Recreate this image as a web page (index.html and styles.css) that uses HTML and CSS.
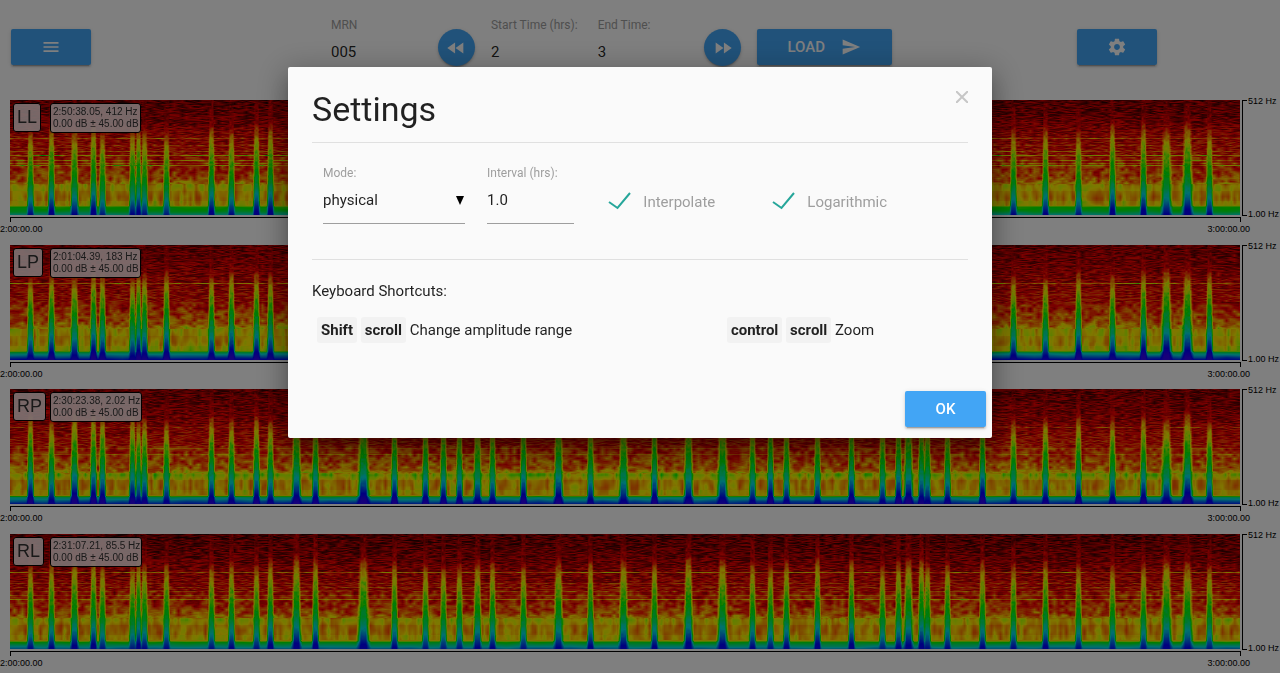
FILE: index.html
```html
<!DOCTYPE html>
<html lang="en">
<head>
<meta charset="utf-8">
<meta name="viewport" content="width=device-width, initial-scale=1">
<title>Spectrogram Viewer</title>
<link rel="stylesheet" href="styles.css">
</head>
<body>
<div class="page">
  <header class="toolbar">
    <div class="cell menu-cell">
      <button class="btn" type="button" aria-label="Menu">
        <svg class="icon" viewBox="0 0 24 24"><path d="M3 18h18v-2H3v2zm0-5h18v-2H3v2zm0-7v2h18V6H3z"/></svg>
      </button>
    </div>
    <div class="cell field mrn-cell">
      <label for="mrn">MRN</label>
      <input id="mrn" type="text" value="005">
    </div>
    <div class="cell">
      <button class="btn round" type="button" aria-label="Previous">
        <svg class="icon" viewBox="0 0 24 24"><path d="M11 18V6l-8.5 6 8.5 6zm.5-6l8.5 6V6l-8.5 6z"/></svg>
      </button>
    </div>
    <div class="cell field time-cell">
      <label for="start">Start Time (hrs):</label>
      <input id="start" type="text" value="2">
    </div>
    <div class="cell field time-cell">
      <label for="end">End Time:</label>
      <input id="end" type="text" value="3">
    </div>
    <div class="cell">
      <button class="btn round" type="button" aria-label="Next">
        <svg class="icon" viewBox="0 0 24 24"><path d="M4 18l8.500-6L4 6v12zm9-12v12l8.500-6L13 6z"/></svg>
      </button>
    </div>
    <div class="cell load-cell">
      <button class="btn load" type="button">LOAD
        <svg class="icon" viewBox="0 0 24 24"><path d="M2.010 21L23 12 2.010 3 2 10l15 2-15 2z"/></svg>
      </button>
    </div>
    <div class="cell gear-cell">
      <button class="btn" type="button" aria-label="Settings">
        <svg class="icon" viewBox="0 0 24 24"><path d="M19.430 12.980c.04-.32.07-.64.07-.98s-.03-.66-.07-.98l2.110-1.650c.19-.15.24-.42.12-.64l-2-3.460c-.12-.22-.39-.3-.61-.22l-2.490 1c-.52-.4-1.080-.73-1.690-.98l-.38-2.650C14.460 2.180 14.250 2 14 2h-4c-.25 0-.46.18-.49.42l-.38 2.650c-.61.25-1.170.59-1.690.98l-2.490-1c-.23-.09-.49 0-.61.22l-2 3.460c-.13.22-.07.49.12.64l2.110 1.650c-.04.32-.07.65-.07.98s.03.66.07.98l-2.110 1.650c-.19.15-.24.42-.12.64l2 3.460c.12.22.39.3.61.22l2.490-1c.52.4 1.080.73 1.690.98l.38 2.650c.03.24.24.42.49.42h4c.25 0 .46-.18.49-.42l.38-2.650c.61-.25 1.170-.59 1.690-.98l2.490 1c.23.09.49 0 .61-.22l2-3.460c.12-.22.07-.49-.12-.64l-2.110-1.650zM12 15.500c-1.930 0-3.500-1.570-3.500-3.500s1.570-3.500 3.500-3.500 3.500 1.570 3.500 3.500-1.570 3.500-3.500 3.500z"/></svg>
      </button>
    </div>
  </header>

  <main class="charts">
    <section class="chart">
      <div class="plot"><canvas data-row="0"></canvas>
        <div class="tags"><span class="name">LL</span><span class="readout">2:50:38.05, 412 Hz<br>0.00 dB ± 45.00 dB</span></div></div>
      <div class="freq"><i></i><div><span>512 Hz</span><span>1.00 Hz</span></div></div>
      <div class="time"><i></i><div><span>2:00:00.00</span><span>3:00:00.00</span></div></div>
    </section>
    <section class="chart">
      <div class="plot"><canvas data-row="1"></canvas>
        <div class="tags"><span class="name">LP</span><span class="readout">2:01:04.39, 183 Hz<br>0.00 dB ± 45.00 dB</span></div></div>
      <div class="freq"><i></i><div><span>512 Hz</span><span>1.00 Hz</span></div></div>
      <div class="time"><i></i><div><span>2:00:00.00</span><span>3:00:00.00</span></div></div>
    </section>
    <section class="chart">
      <div class="plot"><canvas data-row="2"></canvas>
        <div class="tags"><span class="name">RP</span><span class="readout">2:30:23.38, 2.02 Hz<br>0.00 dB ± 45.00 dB</span></div></div>
      <div class="freq"><i></i><div><span>512 Hz</span><span>1.00 Hz</span></div></div>
      <div class="time"><i></i><div><span>2:00:00.00</span><span>3:00:00.00</span></div></div>
    </section>
    <section class="chart">
      <div class="plot"><canvas data-row="3"></canvas>
        <div class="tags"><span class="name">RL</span><span class="readout">2:31:07.21, 85.5 Hz<br>0.00 dB ± 45.00 dB</span></div></div>
      <div class="freq"><i></i><div><span>512 Hz</span><span>1.00 Hz</span></div></div>
      <div class="time"><i></i><div><span>2:00:00.00</span><span>3:00:00.00</span></div></div>
    </section>
  </main>
</div>

<div class="overlay">
  <div class="modal" role="dialog" aria-labelledby="settings-title">
    <div class="modal-content">
      <div class="modal-head">
        <h4 id="settings-title">Settings</h4>
        <button class="close" type="button" aria-label="Close">
          <svg viewBox="0 0 12 12"><path d="M0 0l12 12M12 0L0 12"/></svg>
        </button>
      </div>
      <form class="options">
        <div class="cell field mode-cell">
          <label for="mode">Mode:</label>
          <div class="select-wrap">
            <select id="mode"><option>physical</option></select>
            <svg viewBox="0 0 8 9"><path d="M0 0h8L4 9z"/></svg>
          </div>
        </div>
        <div class="cell field interval-cell">
          <label for="interval">Interval (hrs):</label>
          <input id="interval" type="text" value="1.0">
        </div>
        <label class="check"><input type="checkbox" checked>
          <svg viewBox="0 0 24 20"><path d="M1 11l8.500 6L22 2"/></svg>Interpolate</label>
        <label class="check"><input type="checkbox" checked>
          <svg viewBox="0 0 24 20"><path d="M1 11l8.500 6L22 2"/></svg>Logarithmic</label>
      </form>
      <p class="shortcuts-title">Keyboard Shortcuts:</p>
      <div class="shortcuts">
        <div><kbd>Shift</kbd> <kbd>scroll</kbd> Change amplitude range</div>
        <div><kbd>control</kbd> <kbd>scroll</kbd> Zoom</div>
      </div>
    </div>
    <footer class="modal-footer">
      <button class="btn ok" type="button">OK</button>
    </footer>
  </div>
</div>
<script src="spectrogram.js"></script>
</body>
</html>
```
FILE: styles.css
```css
* { box-sizing: border-box; }

body {
  margin: 0;
  background: #fff;
  color: rgba(0, 0, 0, 0.87);
  font: 15px/22px Roboto, sans-serif;
}

.page { display: flex; flex-direction: column; min-height: 100vh; }

/* Toolbar */
.toolbar {
  display: grid;
  grid-template-columns: repeat(24, minmax(0, 1fr));
  height: 95px;
  padding-top: 14px;
}
.cell { padding: 15px 11px 0; min-width: 0; }
.menu-cell { grid-column: span 6; }
.mrn-cell, .time-cell { grid-column: span 2; }
.load-cell { grid-column: span 6; }
.gear-cell { grid-column: span 4; }

.btn {
  display: flex;
  align-items: center;
  justify-content: center;
  width: 80px;
  height: 36px;
  padding: 0;
  border: 0;
  border-radius: 2px;
  background: #42a5f5;
  color: #fff;
  font: 500 15px/36px Roboto, sans-serif;
  box-shadow: 0 2px 2px rgba(0, 0, 0, 0.14), 0 1px 5px rgba(0, 0, 0, 0.12), 0 3px 1px -2px rgba(0, 0, 0, 0.2);
}
.round { width: 37px; height: 37px; border-radius: 50%; }
.round .icon { width: 22px; height: 22px; }
.load { width: 135px; gap: 16px; }
.load-cell, .gear-cell { padding-left: 10px; }
.icon { width: 20px; height: 20px; fill: currentColor; flex: none; }

.field { padding-top: 0; white-space: nowrap; }
.field label { display: block; color: #9e9e9e; font-size: 12px; line-height: 22px; }
.field input, .field select {
  display: block;
  width: 100%;
  height: 45px;
  padding: 0 0 12px;
  border: 0;
  border-bottom: 1px solid #9e9e9e;
  border-radius: 0;
  background: transparent;
  color: inherit;
  font: 15px Roboto, sans-serif;
  outline: 0;
}

/* Charts */
.charts { flex: 1; display: grid; grid-auto-rows: 1fr; color: #000; }
.chart {
  display: grid;
  grid-template-columns: minmax(0, 1fr) 38px;
  grid-template-rows: 115px auto;
  column-gap: 2px;
  align-content: start;
  padding: 5px 0 0 10px;
  font: 9px/12px "Liberation Sans", Arial, sans-serif;
}
.plot { position: relative; }
.plot canvas { display: block; width: 100%; height: 115px; }
.tags {
  position: absolute;
  top: 3px;
  left: 3px;
  display: grid;
  grid-template-columns: 37px auto;
  align-items: start;
  justify-items: start;
}
.tags span {
  border: 1px solid #000;
  border-radius: 3px;
  background: rgba(250, 230, 230, 0.9);
  color: #333;
}
.name { padding: 0 3px; font-size: 18px; line-height: 27px; }
.readout { padding: 2px 1px 2px 2px; font-size: 10px; line-height: 12px; white-space: nowrap; }

.freq { display: flex; gap: 1px; }
.freq i { width: 5px; height: 116px; border: 1px solid #000; border-right: 0; }
.freq div { display: flex; flex-direction: column; justify-content: space-between; margin: -5px 0; white-space: nowrap; }
.time i { display: block; height: 5px; margin: 2px -1px 0 0; border: 1px solid #000; border-bottom: 0; }
.time div { display: flex; justify-content: space-between; margin: 1px -10px 0; }

/* Settings dialog */
.overlay {
  position: fixed;
  inset: 0;
  display: flex;
  align-items: flex-start;
  justify-content: center;
  padding-top: 10vh;
  background: rgba(0, 0, 0, 0.5);
}
.modal {
  width: 55%;
  border-radius: 2px;
  background: #fafafa;
  box-shadow: 0 16px 24px 2px rgba(0, 0, 0, 0.14), 0 6px 30px 5px rgba(0, 0, 0, 0.24), 0 8px 10px -5px rgba(0, 0, 0, 0.3);
}
.modal-content { padding: 24px 24px 40px; }
.modal-head {
  display: flex;
  justify-content: space-between;
  align-items: flex-start;
  padding-bottom: 14px;
  border-bottom: 1px solid #e0e0e0;
}
h4 { margin: 0; font-size: 34px; line-height: 37px; font-weight: 400; }
.close { padding: 0; border: 0; background: none; line-height: 0; }
.close svg { width: 12px; height: 12px; stroke: #c6c6c6; stroke-width: 2; }

.options {
  display: grid;
  grid-template-columns: 3fr 2fr 3fr 3fr 1fr;
  padding: 19px 0 35px;
  border-bottom: 1px solid #e0e0e0;
}
.options .cell { padding-top: 0; }
.options .field input, .options .field select { height: 40px; padding-bottom: 8px; }
.select-wrap { position: relative; }
.select-wrap select { appearance: none; }
.select-wrap svg { position: absolute; right: 1px; top: 12px; width: 8px; height: 9px; pointer-events: none; fill: #000; }
.check {
  display: flex;
  align-items: flex-start;
  gap: 11px;
  padding: 29px 0 0 23px;
  color: #9e9e9e;
}
.check input { position: absolute; opacity: 0; }
.check svg { width: 24px; height: 20px; fill: none; stroke: #26a69a; stroke-width: 2; }

.shortcuts-title { margin: 0; padding: 20px 0 15px; }
.shortcuts { display: grid; grid-template-columns: 5fr 3fr; padding-left: 5px; column-gap: 8px; line-height: 26px; }
kbd {
  display: inline-block;
  padding: 0 4px;
  border-radius: 3px;
  background: #f2f2f2;
  font: 700 15px/26px Roboto, sans-serif;
}
.modal-footer { display: flex; justify-content: flex-end; padding: 8px 6px 11px; }
.ok { width: 81px; }
```
FILE: spectrogram.js
```javascript
const WIDTH = 1230, HEIGHT = 115;

// Spike centres and half widths, in plot pixels
const spikes = [[20,4],[41,4],[64,5],[83,4],[92,4],[122,4],[128,3],[134,4],[156,4],[201,4],
  [221,4],[246,4],[260,4],[286,6],[305,4],[353,8],[384,4],[415,4],[433,4],[449,4],[467,5],[482,4],
  [513,4],[548,6],[580,4],[613,6],[644,4],[678,6],[712,7],[742,4],[760,4],[776,4],[807,4],
  [841,4],[872,4],[888,4],[898,6],[911,4],[917,4],[937,4],[972,4],[1003,4],[1035,4],[1068,4],
  [1102,4],[1133,4],[1156,7],[1177,7],[1199,4]];

const palette = [[0,0,0,0],[0.25,245,0,0],[0.5,255,240,0],[0.57,190,255,0],[0.67,0,250,0],
  [0.82,0,225,225],[0.98,0,0,255],[1.1,70,0,240]];

const rows = [
  {base: [[0,.13],[.2,.18],[.3,.23],[.5,.28],[.6,.32],[.7,.37],[.75,.5],[.85,.47],[.92,.5],[.935,.66],[.97,.7],[1,.8]],
   lines: [[38,.13],[45,.06],[51,.09],[55,.22],[60,.15],[63,.1],[65,.19]], gain: 0},
  {base: [[0,.15],[.2,.19],[.3,.22],[.5,.27],[.6,.33],[.68,.38],[.73,.49],[.85,.5],[.925,.53],[.94,.76],[1,.97]],
   lines: [[38,.2]], gain: .09},
  {base: [[0,.14],[.2,.18],[.3,.21],[.5,.28],[.6,.34],[.7,.39],[.75,.57],[.8,.47],[.93,.48],[.945,.76],[1,.94]],
   lines: [[38,.1],[59,.06],[65,.08]], gain: .08},
  {base: [[0,.12],[.2,.16],[.3,.2],[.5,.26],[.6,.3],[.7,.36],[.75,.51],[.8,.46],[.93,.48],[.945,.67],[.97,.76],[1,.86]],
   lines: [[38,.18],[49,.06],[53,.06],[57,.07],[61,.09],[65,.15]], gain: 0}
];
const spikeCurve = [[0,.14],[.22,.22],[.28,.36],[.36,.48],[.45,.57],[.6,.65],[.75,.73],[.88,.85],[1,.99]];

function curve(stops, t) {
  for (let i = 1; i < stops.length; i++) {
    if (t <= stops[i][0]) {
      const [a, b] = [stops[i - 1], stops[i]];
      return a[1] + (b[1] - a[1]) * (t - a[0]) / (b[0] - a[0]);
    }
  }
  return stops[stops.length - 1][1];
}

function hash(x, y, seed) {
  let h = Math.imul(x, 374761393) + Math.imul(y, 668265263) + Math.imul(seed, 1442695041);
  h = Math.imul(h ^ (h >>> 13), 1274126177);
  h = Math.imul(h ^ (h >>> 15), 2246822519);
  return ((h ^ (h >>> 16)) >>> 0) / 4294967295 - 0.5;
}

function noise(x, y, cw, ch, seed) {
  const gx = x / cw, gy = y / ch, ix = Math.floor(gx), iy = Math.floor(gy);
  const fx = gx - ix, fy = gy - iy;
  const top = hash(ix, iy, seed) * (1 - fx) + hash(ix + 1, iy, seed) * fx;
  const bottom = hash(ix, iy + 1, seed) * (1 - fx) + hash(ix + 1, iy + 1, seed) * fx;
  return top * (1 - fy) + bottom * fy;
}

function color(v) {
  v = Math.max(0, Math.min(1.1, v));
  let i = 1;
  while (i < palette.length - 1 && v > palette[i][0]) i++;
  const a = palette[i - 1], b = palette[i], f = (v - a[0]) / (b[0] - a[0]);
  return [1, 2, 3].map(k => a[k] + (b[k] - a[k]) * f);
}

document.querySelectorAll("canvas[data-row]").forEach(canvas => {
  const r = Number(canvas.dataset.row), row = rows[r], seed = r + 3;
  canvas.width = WIDTH;
  canvas.height = HEIGHT;
  const ctx = canvas.getContext("2d");
  const image = ctx.createImageData(WIDTH, HEIGHT);
  for (let y = 0; y < HEIGHT; y++) {
    const t = y / (HEIGHT - 1);
    const base = curve(row.base, t);
    const line = row.lines.find(l => l[0] === y);
    for (let x = 0; x < WIDTH; x++) {
      let v = base;
      if (t < 0.5) v += noise(x, y, 4, 1, seed) * 0.19;
      else if (t < 0.73) v += noise(x, y, 4, 3, seed) * 0.24 + noise(x, y, 3, 1, seed + 9) * 0.05;
      else if (t < 0.925) v += noise(x, y, 3, 14, seed) * 0.16 + noise(x, y, 5, 6, seed + 7) * 0.09 - (t > 0.79 && t < 0.88 ? 0.03 : 0);
      else v += noise(x, y, 16, 4, seed) * 0.05;
      if (line) v += line[1] * (1 + noise(x, y, 15, 1, seed + 5));
      for (let s = 0; s < spikes.length; s++) {
        const [cx, half] = spikes[s];
        const d = Math.abs(x - cx);
        if (d > half + 3) continue;
        const level = curve(spikeCurve, t - hash(s, 1, seed) * 0.08) + row.gain * Math.max(0, t - 0.2);
        const reach = half * (0.42 + 0.4 * t);
        const shape = Math.max(0, Math.min(1, (reach + 1 - d) / (reach * 0.75)));
        const rough = noise(x, y, 2, 2, seed + 4) * 0.16 * (1 - t);
        v = Math.max(v, v + (level + rough - v) * shape);
      }
      const p = (y * WIDTH + x) * 4, c = color(v);
      image.data[p] = c[0];
      image.data[p + 1] = c[1];
      image.data[p + 2] = c[2];
      image.data[p + 3] = 255;
    }
  }
  ctx.putImageData(image, 0, 0);
});
```
